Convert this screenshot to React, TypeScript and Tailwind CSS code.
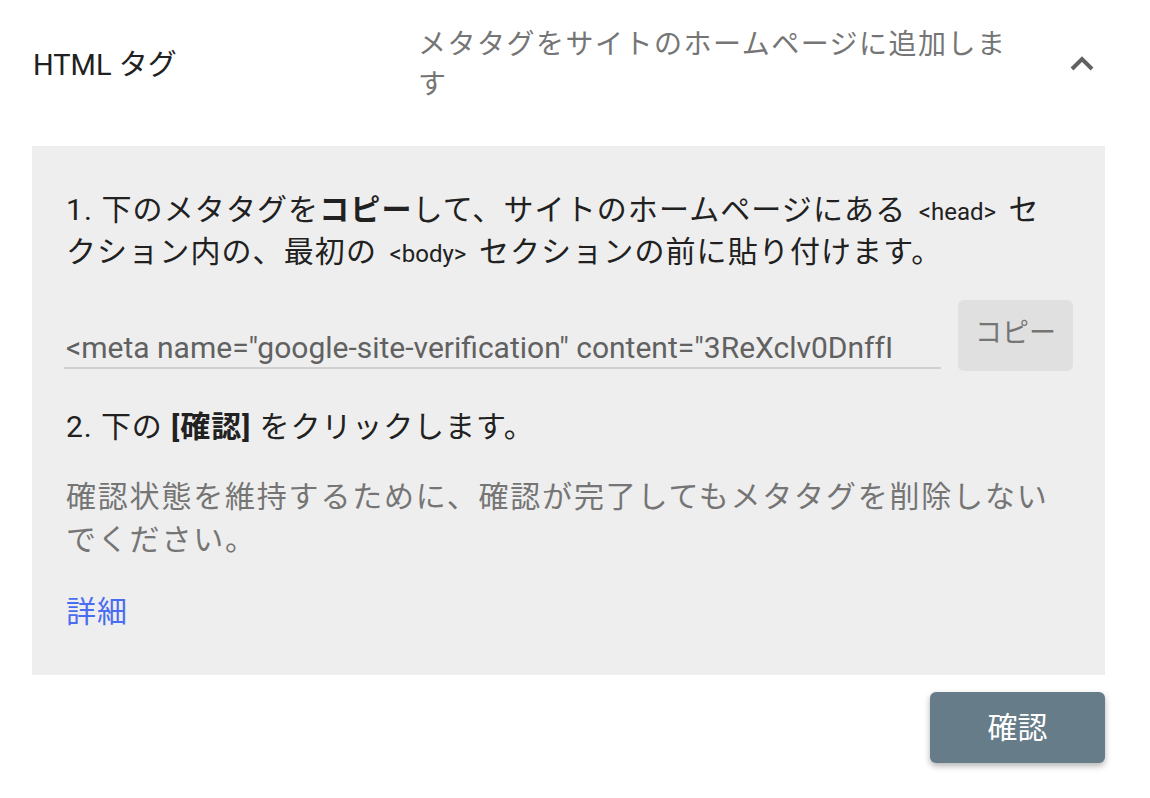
import React from "react";

const font = { fontFamily: 'Roboto, "Noto Sans CJK JP", sans-serif' };

export default function App() {
  return (
    <div
      className="w-[1150px] h-[798px] bg-white overflow-hidden font-['Roboto','Noto_Sans_CJK_JP',sans-serif]"
      style={font}
    >
      {/* Header row */}
      <div className="flex items-start h-[146px] pt-[25px]">
        <div className="w-[418px] pl-[33px] pt-[20px] text-[29px] leading-[40px] text-[#212121]">
          HTML タグ
        </div>
        <div className="w-[605px] text-[28px] leading-[40px] tracking-[1.5px] text-[#757575]">
          メタタグをサイトのホームページに追加します
        </div>
        <div className="flex-1 flex justify-start pl-[47px] pt-[31px]">
          <svg width="24" height="16" viewBox="0 0 24 16">
            <path
              d="M2 13 L12 3 L22 13"
              fill="none"
              stroke="#616161"
              strokeWidth="4"
              strokeLinejoin="miter"
            />
          </svg>
        </div>
      </div>

      {/* Gray box */}
      <div className="ml-[32px] w-[1073px] h-[529px] bg-[#eeeeee] pl-[34px] pr-[32px] pt-[44px]">
        <p className="w-[990px] text-[30px] leading-[40px] tracking-[1.1px] text-[#212121]">
          1. 下のメタタグを<b className="font-bold">コピー</b>して、サイトのホームページにある{" "}
          <span className="text-[24px] tracking-[0px] mx-[4px]">&lt;head&gt;</span> セクション内の、最初の{" "}
          <span className="text-[24px] tracking-[0px] mx-[4px]">&lt;body&gt;</span> セクションの前に貼り付けます。
        </p>

        <div className="flex items-start mt-[33px] -ml-[2px]">
          <div className="w-[877px] h-[62px] border-b-2 border-[#d0d0d0] flex items-end pl-[2px] pb-[1px] overflow-hidden whitespace-nowrap">
            <span className="text-[30px] leading-[36px] text-[#616161]">
              &lt;meta name="google-site-verification" content="3ReXclv0DnffI
            </span>
          </div>
          <button className="ml-[17px] -mt-[7px] w-[115px] h-[71px] rounded-[6px] bg-[#e0e0e0] text-[27px] text-[#757575] pb-[4px]">
            コピー
          </button>
        </div>

        <p className="mt-[36px] text-[30px] leading-[40px] tracking-[0.9px] text-[#212121]">
          2. 下の <b className="font-bold">[確認]</b> をクリックします。
        </p>

        <p className="mt-[28px] w-[1000px] text-[30px] leading-[43px] tracking-[1.8px] text-[#757575]">
          確認状態を維持するために、確認が完了してもメタタグを削除しないでください。
        </p>

        <p className="mt-[31px] text-[30px] leading-[40px] tracking-[1px] text-[#4a6cf0]">
          詳細
        </p>
      </div>

      {/* Confirm button */}
      <div className="flex justify-end w-[1105px] mt-[17px]">
        <button className="w-[175px] h-[71px] rounded-[6px] bg-[#667c89] text-white text-[30px] shadow-[0_3px_6px_rgba(0,0,0,0.3)]">
          確認
        </button>
      </div>
    </div>
  );
}
